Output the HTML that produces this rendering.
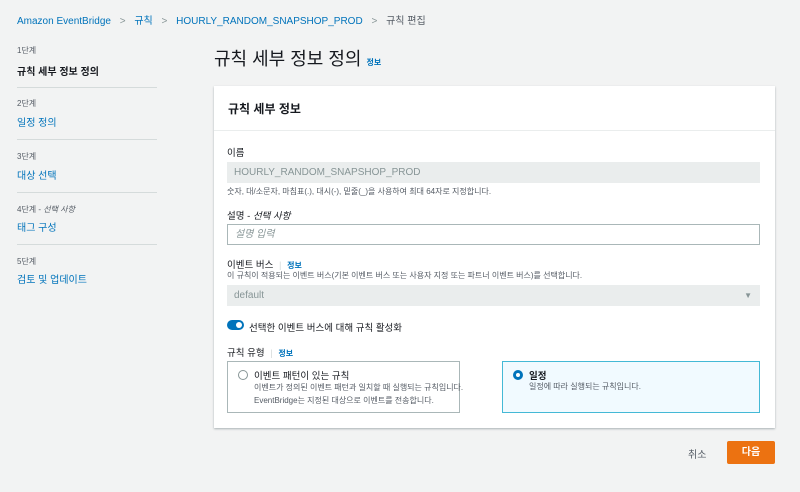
<!DOCTYPE html>
<html><head><meta charset="utf-8"><style>
*{box-sizing:border-box;margin:0;padding:0}
body{width:800px;height:492px;background:#f2f3f3;font-family:"Liberation Sans","Noto Sans CJK KR",sans-serif;color:#16191f;position:relative;overflow:hidden}
.a{position:absolute;white-space:nowrap}
.blue{color:#0073bb}
.s{font-size:9px;color:#545b64}
.hr{position:absolute;left:17px;width:140px;height:1px;background:#d5dbdb}
.inp{position:absolute;left:227px;width:533px;height:21px;font-size:10px;padding:0 7px;line-height:21px}
.card{position:absolute;top:361px;height:52px;border:1px solid #aab7b8;background:#fff}
</style></head><body>
<div class="a blue" style="left:17px;top:12px;font-size:10px">Amazon EventBridge <span style="color:#879596;margin:0 6px">&gt;</span> 규칙 <span style="color:#879596;margin:0 6px">&gt;</span> HOURLY_RANDOM_SNAPSHOP_PROD <span style="color:#879596;margin:0 6px">&gt;</span> <span style="color:#545b64">규칙 편집</span></div>
<div class="a s" style="left:17px;top:45px;font-size:8px">1단계</div>
<div class="a" style="left:17px;top:63px;font-size:10px;font-weight:bold">규칙 세부 정보 정의</div>
<div class="hr" style="top:87px"></div>
<div class="a s" style="left:17px;top:98px;font-size:8px">2단계</div>
<div class="a blue" style="left:17px;top:114px;font-size:10px">일정 정의</div>
<div class="hr" style="top:139px"></div>
<div class="a s" style="left:17px;top:151px;font-size:8px">3단계</div>
<div class="a blue" style="left:17px;top:167px;font-size:10px">대상 선택</div>
<div class="hr" style="top:192px"></div>
<div class="a s" style="left:17px;top:204px;font-size:8px">4단계 - <i>선택 사항</i></div>
<div class="a blue" style="left:17px;top:219px;font-size:10px">태그 구성</div>
<div class="hr" style="top:244px"></div>
<div class="a s" style="left:17px;top:256px;font-size:8px">5단계</div>
<div class="a blue" style="left:17px;top:271px;font-size:10px">검토 및 업데이트</div>

<div class="a" style="left:214px;top:45px;font-size:18px">규칙 세부 정보 정의 <span class="blue" style="font-size:8px;font-weight:bold">정보</span></div>
<div style="position:absolute;left:214px;top:86px;width:561px;height:342px;background:#fff;box-shadow:0 1px 2px rgba(0,28,36,.3)"></div>
<div style="position:absolute;left:214px;top:130px;width:561px;height:1px;background:#eaeded"></div>
<div class="a" style="left:228px;top:100px;font-size:12px;font-weight:bold">규칙 세부 정보</div>

<div class="a" style="left:227px;top:145px;font-size:9.5px">이름</div>
<div class="inp" style="top:162px;background:#eaeded;color:#879596">HOURLY_RANDOM_SNAPSHOP_PROD</div>
<div class="a s" style="left:227px;top:186px;font-size:8px">숫자, 대/소문자, 마침표(.), 대시(-), 밑줄(_)을 사용하여 최대 64자로 지정합니다.</div>
<div class="a" style="left:227px;top:208px;font-size:9.5px">설명 - <i>선택 사항</i></div>
<div class="inp" style="top:224px;border:1px solid #aab7b8;color:#879596;font-style:italic;line-height:19px">설명 입력</div>
<div class="a" style="left:227px;top:257px;font-size:9.5px">이벤트 버스 <span style="color:#d5dbdb;margin:0 3px">|</span> <span class="blue" style="font-size:8px;font-weight:bold">정보</span></div>
<div class="a s" style="left:227px;top:270px;font-size:8px">이 규칙이 적용되는 이벤트 버스(기본 이벤트 버스 또는 사용자 지정 또는 파트너 이벤트 버스)를 선택합니다.</div>
<div class="inp" style="top:285px;background:#eaeded;color:#879596">default<span style="position:absolute;right:8px;font-size:8px">▼</span></div>
<div style="position:absolute;left:227px;top:320px;width:17px;height:10px;border-radius:5px;background:#0073bb"><div style="position:absolute;right:2px;top:2px;width:6px;height:6px;border-radius:50%;background:#fff"></div></div>
<div class="a" style="left:249px;top:320px;font-size:9.5px">선택한 이벤트 버스에 대해 규칙 활성화</div>
<div class="a" style="left:227px;top:345px;font-size:9.5px">규칙 유형 <span style="color:#d5dbdb;margin:0 3px">|</span> <span class="blue" style="font-size:8px;font-weight:bold">정보</span></div>
<div class="card" style="left:227px;width:233px">
<div style="position:absolute;left:10px;top:8px;width:10px;height:10px;border:1px solid #879596;border-radius:50%"></div>
<div class="a" style="left:26px;top:6px;font-size:9.5px">이벤트 패턴이 있는 규칙</div>
<div class="a s" style="left:26px;top:19px;font-size:8px;line-height:13px">이벤트가 정의된 이벤트 패턴과 일치할 때 실행되는 규칙입니다.<br>EventBridge는 지정된 대상으로 이벤트를 전송합니다.</div>
</div>
<div class="card" style="left:502px;width:258px;border-color:#44b9d6;background:#f1faff">
<div style="position:absolute;left:10px;top:8px;width:10px;height:10px;border:3px solid #0073bb;border-radius:50%;background:#fff"></div>
<div class="a" style="left:26px;top:6px;font-size:9.5px;font-weight:bold">일정</div>
<div class="a s" style="left:26px;top:19px;font-size:8px">일정에 따라 실행되는 규칙입니다.</div>
</div>
<div class="a" style="left:688px;top:446px;font-size:10px;color:#545b64">취소</div>
<div style="position:absolute;left:727px;top:441px;width:48px;height:23px;background:#ec7211;color:#fff;font-size:10px;font-weight:bold;text-align:center;line-height:23px;border-radius:2px">다음</div>
</body></html>
